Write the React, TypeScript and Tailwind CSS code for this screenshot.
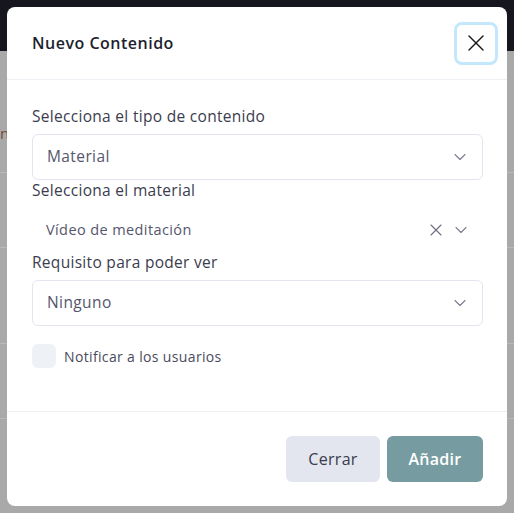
import { X, ChevronDown } from "lucide-react";

const font = { fontFamily: '"Open Sans", "Noto Sans", sans-serif' };

function Background() {
  return (
    <div className="absolute inset-0 bg-[#a9a9a9]">
      <div className="h-[51px] bg-[#16161e]" />
      <div className="absolute left-0 top-[122px] text-[15px] text-[#7a4a3a]">ni</div>
      <div className="absolute left-0 right-0 top-[172px] h-px bg-[#b8b8b8]" />
      <div className="absolute left-0 right-0 top-[247px] h-px bg-[#b8b8b8]" />
      <div className="absolute left-0 right-0 top-[343px] h-px bg-[#b8b8b8]" />
      <div className="absolute left-0 right-0 top-[418px] h-px bg-[#b8b8b8]" />
    </div>
  );
}

function SelectBox({ value }: { value: string }) {
  return (
    <div className="flex h-[46px] items-center justify-between rounded-md border border-[#e3e4ef] pl-[14px] pr-[12px]">
      <span className="text-[15.5px] tracking-[0.4px] text-[#55566b]">{value}</span>
      <ChevronDown className="h-[20px] w-[20px] text-[#7b7c90]" strokeWidth={1.3} />
    </div>
  );
}

export default function App() {
  return (
    <div className="relative h-[513px] w-[514px] overflow-hidden" style={font}>
      <Background />
      <div className="absolute left-[7px] top-[7px] flex h-[499px] w-[500px] flex-col rounded-lg bg-white">
        <div className="flex h-[73px] items-center justify-between border-b border-[#edf0f4] pl-[25px] pr-[9px]">
          <h2 className="text-[16px] font-semibold tracking-[0.5px] text-[#1e1f2e]">Nuevo Contenido</h2>
          <button className="flex h-[43px] w-[44px] items-center justify-center rounded-lg border-[3px] border-[#c3e7fd] bg-white">
            <X className="h-[28px] w-[28px] text-[#1a1a1a]" strokeWidth={1.2} />
          </button>
        </div>

        <div className="flex flex-1 flex-col pl-[25px] pr-[24px] pt-[26px]">
          <label className="text-[15.5px] leading-[20px] tracking-[0.3px] text-[#3b3c4e]">Selecciona el tipo de contenido</label>
          <div className="mt-[8px]">
            <SelectBox value="Material" />
          </div>

          <label className="text-[15.5px] leading-[20px] tracking-[0.3px] text-[#3b3c4e]">Selecciona el material</label>
          <div className="flex h-[52px] items-center justify-between pl-[14px] pr-[12px] pt-[8px]">
            <span className="text-[14.5px] tracking-[0.4px] text-[#55566b]">Vídeo de meditación</span>
            <div className="flex items-center gap-[5px]">
              <X className="h-[20px] w-[20px] text-[#6c6d82]" strokeWidth={1.3} />
              <ChevronDown className="h-[20px] w-[20px] text-[#7b7c90]" strokeWidth={1.3} />
            </div>
          </div>

          <label className="text-[15.5px] leading-[20px] tracking-[0.3px] text-[#3b3c4e]">Requisito para poder ver</label>
          <div className="mt-[8px]">
            <SelectBox value="Ninguno" />
          </div>

          <div className="mt-[18px] flex items-center gap-[8px]">
            <div className="h-[24px] w-[24px] rounded-md bg-[#eef1f5]" />
            <span className="text-[14px] tracking-[0.35px] text-[#4a4b5c]">Notificar a los usuarios</span>
          </div>
        </div>

        <div className="flex h-[95px] items-center justify-end gap-[7px] border-t border-[#edf0f4] pr-[24px]">
          <button className="h-[46px] w-[94px] rounded-md bg-[#e3e5ef] text-[16px] font-medium tracking-[0.3px] text-[#3a3b4c]">
            Cerrar
          </button>
          <button className="h-[46px] w-[96px] rounded-md bg-[#769ca2] text-[16px] font-semibold tracking-[0.3px] text-white">
            Añadir
          </button>
        </div>
      </div>
    </div>
  );
}
